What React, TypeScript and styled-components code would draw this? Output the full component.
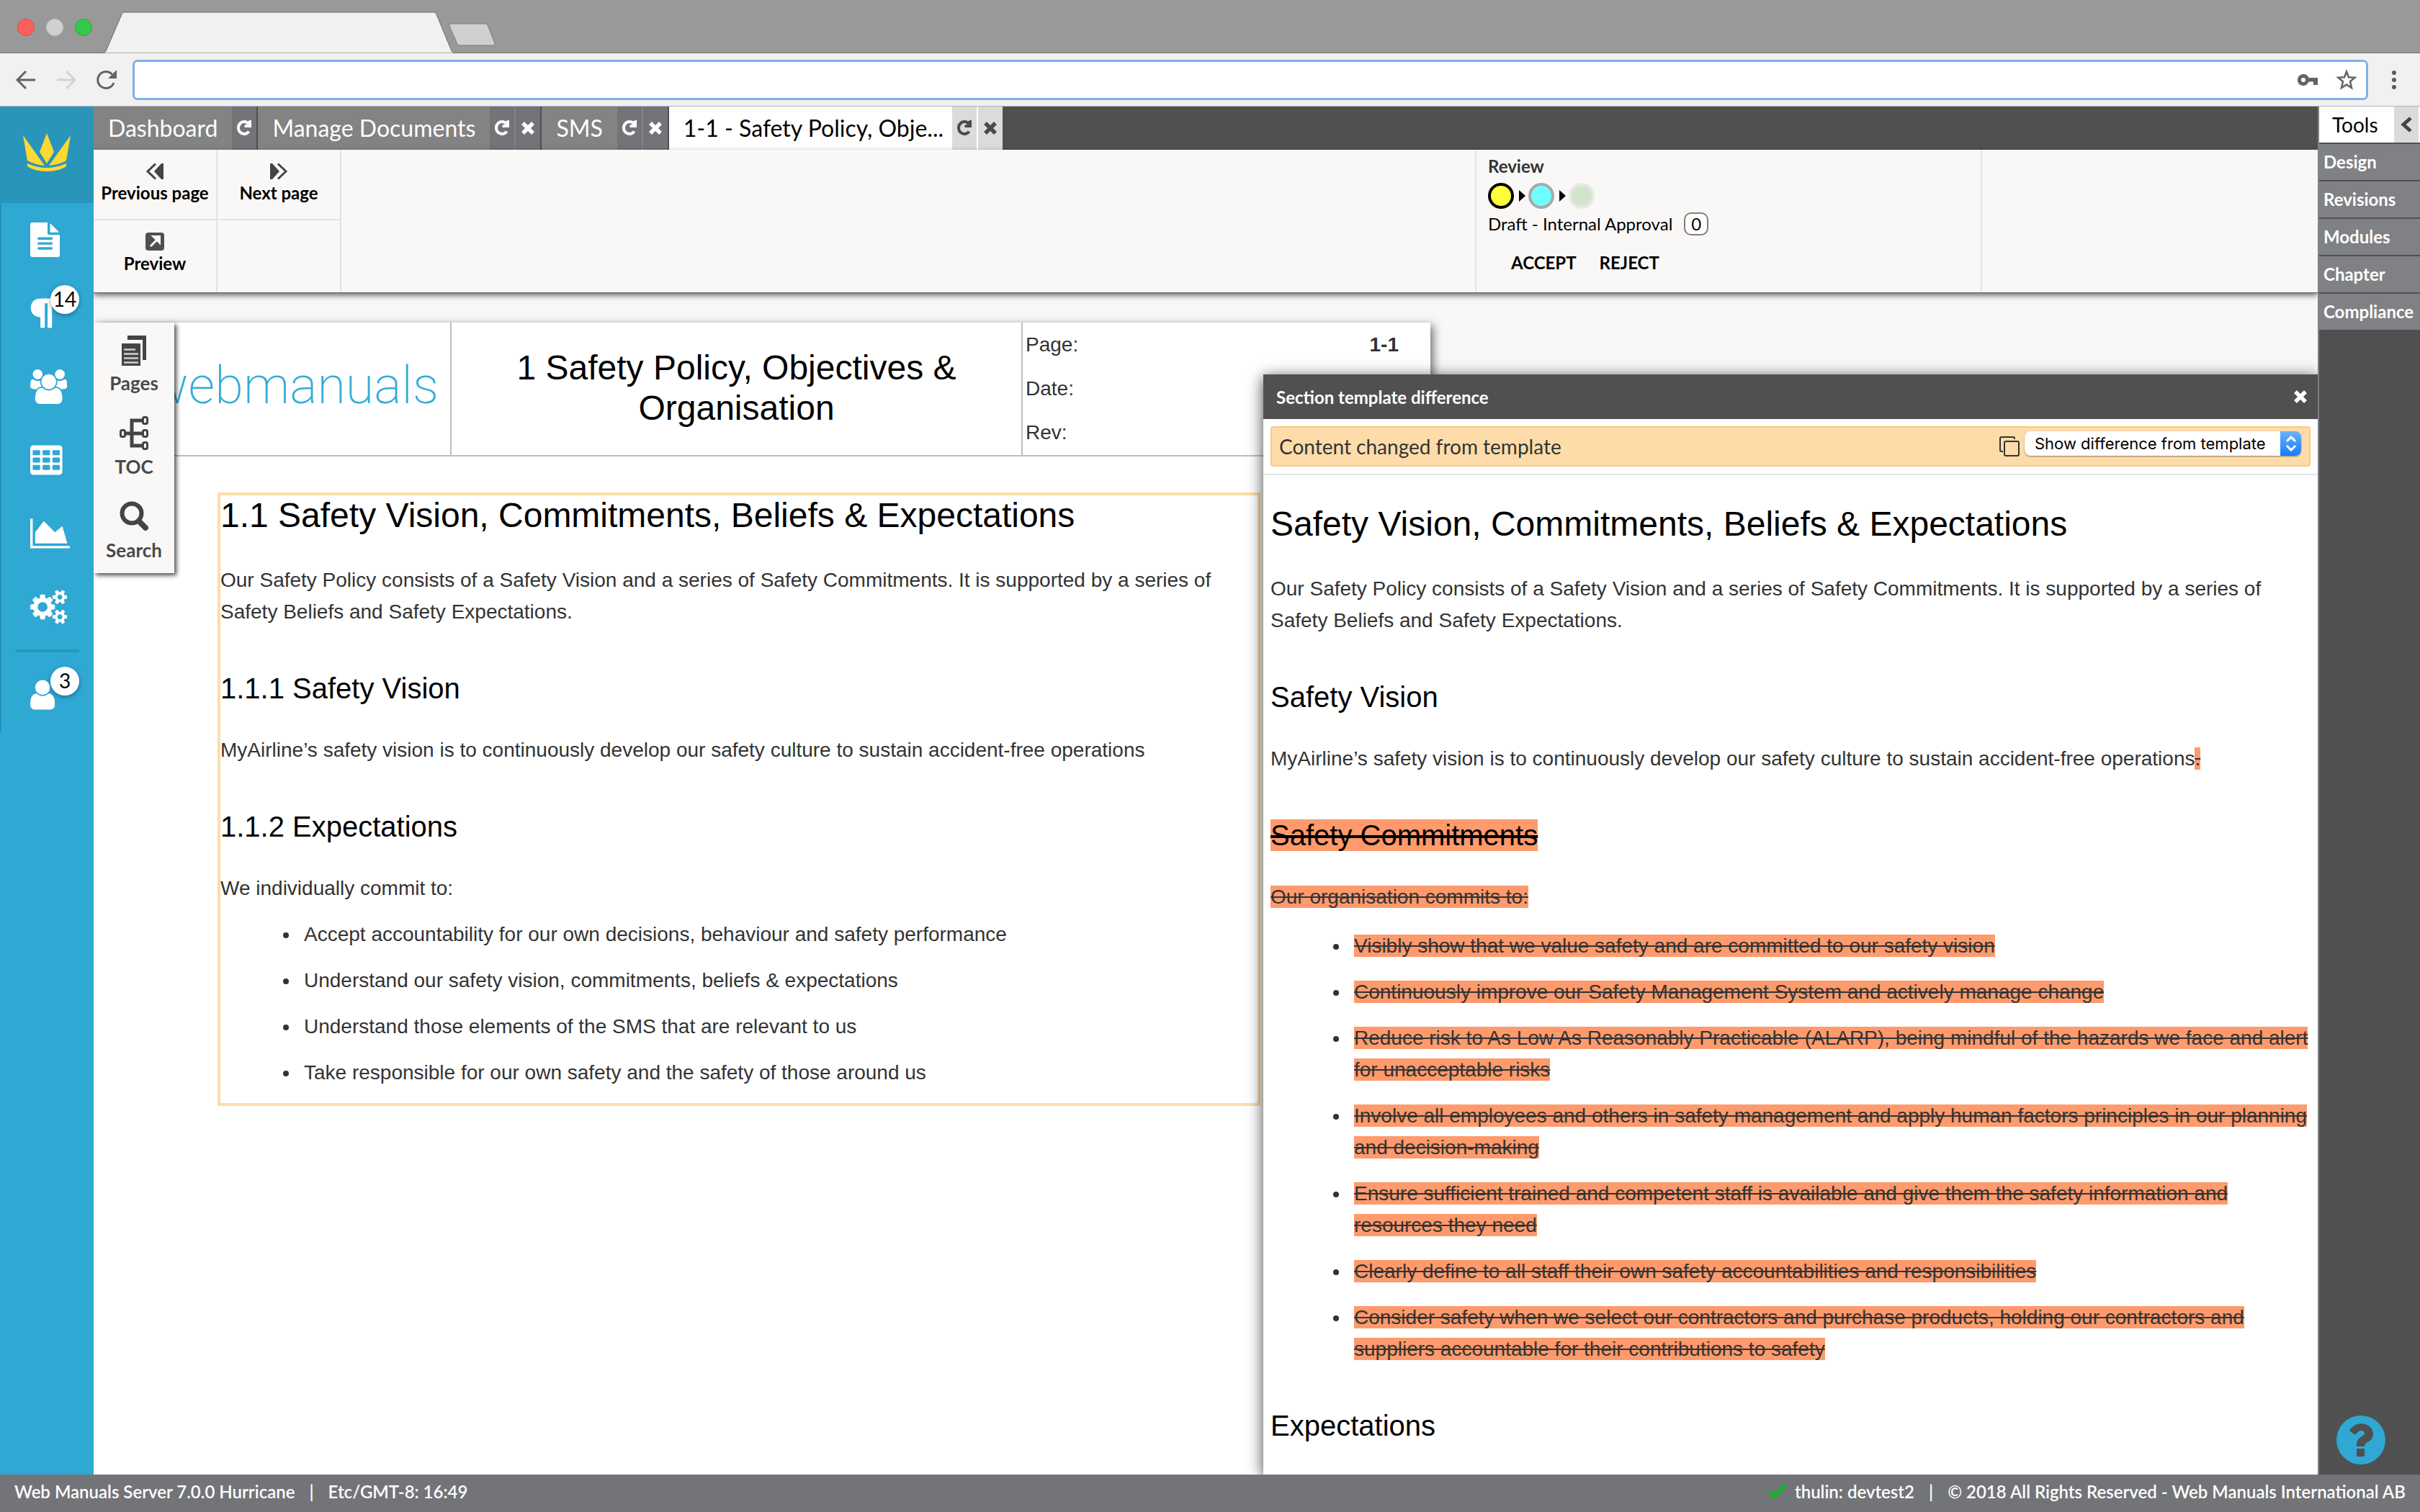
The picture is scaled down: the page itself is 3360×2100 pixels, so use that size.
import React from "react";
import styled, { createGlobalStyle, css } from "styled-components";

const ui = `Lato, "Open Sans", sans-serif`;
const doc = `"Liberation Sans", Arial, sans-serif`;

const GlobalStyle = createGlobalStyle`
  * { box-sizing: border-box; }
  body { margin: 0; font-family: ${ui}; font-size: 24px; color: #000; background: #fff; }
  button, input, select { font: inherit; color: inherit; margin: 0; padding: 0; border: 0; background: none; }
  svg { display: block; }
  h1, h2, p, ul, dl, dd { margin: 0; padding: 0; }
`;

const Shell = styled.div`
  height: 100vh;
  display: flex;
  flex-direction: column;
  overflow: hidden;
`;

/* Browser window */

const TitleBar = styled.div`
  display: flex;
  height: 74px;
  background: #999;
  border-bottom: 1px solid #6d6d6d;
`;

const Lights = styled.div`
  display: flex;
  align-items: center;
  gap: 16px;
  padding: 2px 16px 0 24px;
`;

const Light = styled.span<{ $fill: string; $edge: string }>`
  width: 24px;
  height: 24px;
  border-radius: 50%;
  background: ${(p) => p.$fill};
  border: 1px solid ${(p) => p.$edge};
`;

const NavBar = styled.div`
  display: flex;
  align-items: center;
  height: 74px;
  padding-left: 8px;
  background: #f1f1f1;
  border-bottom: 1px solid #b3b3b3;
`;

const NavButton = styled.button<{ $width?: number }>`
  width: ${(p) => p.$width ?? 56}px;
  height: 56px;
  display: grid;
  place-items: center;
  color: #646464;
`;

const AddressBar = styled.div`
  flex: 1;
  display: flex;
  align-items: center;
  height: 56px;
  margin-left: 8px;
  background: #fff;
  border: 3px solid #7fb1ea;
  border-radius: 7px;
`;

const AddressInput = styled.input`
  flex: 1;
  min-width: 0;
  height: 100%;
  padding: 0 12px;
  outline: 0;
`;

/* Application frame */

const Body = styled.div`
  flex: 1;
  min-height: 0;
  display: flex;
`;

const Sidebar = styled.nav`
  width: 130px;
  flex: none;
  background: #2fa8d4;
`;

const LogoTile = styled.div`
  height: 134px;
  padding: 36px 32px 0;
  background: #2995bb;
`;

const SideItem = styled.button`
  position: relative;
  display: flex;
  align-items: center;
  width: 100%;
  height: 102px;
  padding-left: 40px;
  border-left: 2px solid #2590b5;
  color: #fff;
`;

const SideDivider = styled.div`
  padding: 8px 20px;
  border-left: 2px solid #2590b5;
  &::after { content: ""; display: block; height: 4px; background: #2995bb; }
`;

const CountBadge = styled.span`
  position: absolute;
  left: 68px;
  top: 12px;
  width: 40px;
  height: 40px;
  border-radius: 50%;
  background: #fff;
  color: #000;
  font-size: 28px;
  line-height: 38px;
  text-align: center;
  box-shadow: 0 2px 6px rgba(0, 0, 0, 0.35);
`;

const Main = styled.div`
  position: relative;
  flex: 1;
  min-width: 0;
  display: flex;
  flex-direction: column;
  overflow: hidden;
  background: #f9f8f6;
`;

const Tabs = styled.div`
  display: flex;
  height: 60px;
  flex: none;
  background: #505050;
`;

const Tab = styled.div<{ $active?: boolean }>`
  display: flex;
  gap: 2px;
  background: ${(p) => (p.$active ? "#fff" : "#838383")};
  color: ${(p) => (p.$active ? "#000" : "#fff")};
  border-right: ${(p) => (p.$active ? 0 : 2)}px solid #505050;
`;

const TabLabel = styled.button<{ $active?: boolean }>`
  padding: 0 ${(p) => (p.$active ? 10 : 18)}px 0 20px;
  font-size: 32px;
  line-height: 60px;
`;

const TabAction = styled.button<{ $active?: boolean }>`
  width: 34px;
  display: grid;
  place-items: center;
  background: ${(p) => (p.$active ? "#dbdbdb" : "#737478")};
  color: ${(p) => (p.$active ? "#4a4a4a" : "#fff")};
`;

const Ribbon = styled.div`
  position: relative;
  z-index: 1;
  display: flex;
  height: 198px;
  flex: none;
  background: #f9f8f6;
  box-shadow: 0 1px 1px #6a6a68, 0 4px 8px rgba(0, 0, 0, 0.6);
`;

const PageActions = styled.div`
  display: grid;
  grid-template: 98px 100px / 172px 172px;
`;

const cell = css`
  border-right: 2px solid #e3e3e1;
  &:nth-child(-n + 2) { border-bottom: 2px solid #e3e3e1; }
`;

const PageAction = styled.button`
  ${cell}
  display: flex;
  flex-direction: column;
  align-items: center;
  padding-top: 16px;
  font-weight: 700;
  line-height: 32px;
  white-space: nowrap;
`;

const EmptyCell = styled.div`
  ${cell}
`;

const Review = styled.section`
  width: 704px;
  margin-left: auto;
  margin-right: 466px;
  padding: 7px 16px;
  border: solid #e3e3e1;
  border-width: 0 2px;
  line-height: 32px;
`;

const ReviewTitle = styled.h2`
  font-size: 24px;
  color: #333;
`;

const Steps = styled.div`
  display: flex;
  align-items: center;
  gap: 4px;
  margin: 7px 0 3px;
`;

const Step = styled.span<{ $fill: string; $edge: string }>`
  width: 36px;
  height: 36px;
  border-radius: 50%;
  background: ${(p) => p.$fill};
  border: 4px solid ${(p) => p.$edge};
`;

const Status = styled.div`
  display: flex;
  align-items: center;
  gap: 16px;
  height: 36px;
`;

const StatusCount = styled.span`
  width: 34px;
  height: 32px;
  border: 2px solid #7d7d7d;
  border-radius: 10px;
  background: #fff;
  line-height: 28px;
  text-align: center;
`;

const Decisions = styled.div`
  display: flex;
  gap: 32px;
  margin-top: 20px;
  padding-left: 32px;
  button { font-weight: 700; line-height: 32px; }
`;

const Canvas = styled.div`
  flex: 1;
  min-height: 0;
  padding-top: 42px;
`;

const Sheet = styled.article`
  width: 1856px;
  height: 100%;
  background: #fff;
  color: #333;
  font-family: ${doc};
  font-size: 28px;
  line-height: 44px;
  box-shadow: 4px 4px 12px rgba(0, 0, 0, 0.55);
`;

const SheetHeader = styled.header`
  display: grid;
  grid-template-columns: 497px 793px 1fr;
  height: 186px;
  border-bottom: 2px solid #bdbdbd;
`;

const SheetLogo = styled.div`
  display: flex;
  align-items: center;
  justify-content: flex-end;
  padding: 0 16px 8px 0;
  border-right: 2px solid #bdbdbd;
  color: #34acd6;
  font-family: Roboto, sans-serif;
  font-weight: 200;
  font-size: 72px;
  line-height: 92px;
`;

const SheetTitle = styled.div`
  display: grid;
  place-items: center;
  padding: 0 64px 2px;
  border-right: 2px solid #bdbdbd;
  color: #000;
  font-size: 48px;
  line-height: 56px;
  text-align: center;
`;

const Facts = styled.dl`
  padding: 0 44px 0 4px;
`;

const Fact = styled.div`
  display: flex;
  justify-content: space-between;
  line-height: 61px;
  dd { font-weight: 700; }
`;

const Prose = styled.div`
  font-family: ${doc};
  font-size: 28px;
  line-height: 44px;
  color: #333;
  h1, h2 { color: #000; font-weight: 400; margin-bottom: 40px; }
  h1 { font-size: 48px; line-height: 56px; }
  h2 { font-size: 40px; line-height: 48px; margin-top: 60px; }
  ul { padding-left: 110px; }
  li { margin-top: 20px; padding-left: 6px; }
`;

const SectionBox = styled(Prose)`
  width: 1448px;
  margin: 50px 0 0 172px;
  padding-bottom: 20px;
  border: 4px solid #fddcaa;
`;

const Dock = styled.div`
  position: absolute;
  z-index: 2;
  left: 0;
  top: 300px;
  width: 112px;
  height: 348px;
  display: flex;
  flex-direction: column;
  padding-top: 10px;
  background: #f9f8f6;
  box-shadow: 3px 3px 6px rgba(0, 0, 0, 0.7);
`;

const DockButton = styled.button`
  height: 116px;
  flex: none;
  display: flex;
  flex-direction: column;
  align-items: center;
  justify-content: flex-start;
  gap: 2px;
  font-weight: 700;
  font-size: 26px;
  line-height: 32px;
  color: #4a4a4a;
`;

/* Template difference window */

const Dialog = styled.section`
  position: absolute;
  z-index: 3;
  right: 0;
  top: 372px;
  bottom: 0;
  width: 1464px;
  display: flex;
  flex-direction: column;
  background: #fff;
  box-shadow: 0 4px 20px rgba(0, 0, 0, 0.75);
`;

const DialogHead = styled.header`
  display: flex;
  align-items: center;
  justify-content: space-between;
  height: 62px;
  flex: none;
  padding: 0 9px 0 18px;
  background: #505050;
  color: #fff;
  font-weight: 700;
  button { width: 30px; height: 40px; display: grid; place-items: center; }
`;

const NoticeRow = styled.div`
  padding: 10px;
  border-bottom: 2px solid #e4e4e4;
`;

const Notice = styled.div`
  display: flex;
  align-items: center;
  height: 56px;
  padding: 0 11px 0 10px;
  background: #fddcaa;
  border: 2px solid #fcc974;
  border-radius: 4px;
  color: #333;
  font-size: 28px;
`;

const CopyButton = styled.button`
  margin-left: auto;
  margin-right: 6px;
`;

const SelectWrap = styled.label`
  position: relative;
  width: 384px;
  height: 34px;
  margin-bottom: 8px;
`;

const Select = styled.select`
  display: block;
  appearance: none;
  width: 100%;
  height: 34px;
  padding: 0 32px 0 14px;
  border-radius: 8px;
  background: #fff;
  box-shadow: 0 1px 2px rgba(0, 0, 0, 0.45);
  color: #000;
  font-family: Inter, sans-serif;
  font-size: 22px;
  line-height: 34px;
`;

const SelectArrows = styled.span`
  position: absolute;
  right: 0;
  top: 0;
  width: 29px;
  height: 34px;
  display: grid;
  place-items: center;
  border-radius: 0 8px 8px 0;
  background: linear-gradient(#6db2fa, #167dfc);
  pointer-events: none;
`;

const DialogBody = styled(Prose)`
  padding: 40px 6px 0 10px;
  ul { padding-top: 4px; }
`;

const Removed = styled.del`
  background: #fe9a6c;
`;

/* Tools column */

const Tools = styled.aside`
  position: relative;
  width: 142px;
  flex: none;
  background: #505050;
  border-left: 2px solid #808184;
`;

const ToolsHead = styled.div`
  display: flex;
  height: 50px;
  padding-right: 2px;
  background: #fff;
  font-size: 28px;
  line-height: 50px;
`;

const ToolsTitle = styled.span`
  flex: 1;
  padding-left: 18px;
`;

const Collapse = styled.button`
  width: 34px;
  display: grid;
  place-items: center;
  background: #dbdbdb;
`;

const ToolItem = styled.button`
  display: block;
  width: 100%;
  height: 50px;
  margin-top: 2px;
  padding: 0 0 2px 6px;
  background: #808184;
  color: #fff;
  font-weight: 700;
  text-align: left;
`;

const Help = styled.button`
  position: absolute;
  right: 48px;
  bottom: 14px;
`;

/* Status line */

const Footer = styled.footer`
  display: flex;
  align-items: center;
  justify-content: space-between;
  height: 52px;
  padding: 0 20px 6px;
  background: #737478;
  color: #fff;
  font-weight: 600;
`;

const FooterGroup = styled.div`
  display: flex;
  align-items: center;
  gap: 20px;
`;

const User = styled.span`
  display: flex;
  align-items: center;
  gap: 11px;
`;

/* Drawings */

const icons = {
  file: {
    box: "128 0 1536 1792",
    d: "M1596 476q14 14 28 36h-472v-472q22 14 36 28zm-476 164h544v1056q0 40-28 68t-68 28h-1344q-40 0-68-28t-28-68v-1600q0-40 28-68t68-28h800v544q0 40 28 68t68 28zm160 736v-64q0-14-9-23t-23-9h-704q-14 0-23 9t-9 23v64q0 14 9 23t23 9h704q14 0 23-9t9-23zm0-256v-64q0-14-9-23t-23-9h-704q-14 0-23 9t-9 23v64q0 14 9 23t23 9h704q14 0 23-9t9-23zm0-256v-64q0-14-9-23t-23-9h-704q-14 0-23 9t-9 23v64q0 14 9 23t23 9h704q14 0 23-9t9-23z",
  },
  paragraph: {
    box: "256 0 1280 1792",
    d: "M1534 189v73q0 29-18.5 61t-42.5 32q-50 0-54 1-26 6-32 31-3 11-3 64v1152q0 25-18 43t-43 18h-108q-25 0-43-18t-18-43v-1218h-143v1218q0 25-17.5 43t-43.5 18h-108q-26 0-43.5-18t-17.5-43v-496q-147-12-245-59-126-58-192-179-64-117-64-259 0-166 88-286 88-118 209-159 111-37 417-37h479q25 0 43 18t18 43z",
  },
  users: {
    box: "0 0 1920 1792",
    d: "M593 896q-162 5-265 128h-134q-82 0-138-40.5t-56-118.5q0-353 124-353 6 0 43.5 21t97.5 42.5 119 21.5q67 0 133-23-5 37-5 66 0 139 81 256zm1071 637q0 120-73 189.5t-194 69.5h-874q-121 0-194-69.5t-73-189.5q0-53 3.5-103.5t14-109 26.5-108.5 43-97.5 62-81 85.5-53.5 111.5-20q10 0 43 21.5t73 48 107 48 135 21.5 135-21.5 107-48 73-48 43-21.5q61 0 111.5 20t85.5 53.5 62 81 43 97.5 26.5 108.5 14 109 3.5 103.5zm-1024-1277q0 106-75 181t-181 75-181-75-75-181 75-181 181-75 181 75 75 181zm704 384q0 159-112.5 271.5t-271.5 112.5-271.5-112.5-112.5-271.5 112.5-271.5 271.5-112.5 271.5 112.5 112.5 271.5zm576 225q0 78-56 118.5t-138 40.5h-134q-103-123-265-128 81-117 81-256 0-29-5-66 66 23 133 23 59 0 119-21.5t97.5-42.5 43.5-21q124 0 124 353zm-128-609q0 106-75 181t-181 75-181-75-75-181 75-181 181-75 181 75 75 181z",
  },
  table: {
    box: "0 0 1664 1792",
    d: "M160 128h1344q66 0 113 47t47 113v1216q0 66-47 113t-113 47h-1344q-66 0-113-47t-47-113v-1216q0-66 47-113t113-47zM128 416v192q0 32 32 32h320q32 0 32-32v-192q0-32-32-32h-320q-32 0-32 32zm512 0v192q0 32 32 32h320q32 0 32-32v-192q0-32-32-32h-320q-32 0-32 32zm512 0v192q0 32 32 32h320q32 0 32-32v-192q0-32-32-32h-320q-32 0-32 32zM128 800v192q0 32 32 32h320q32 0 32-32v-192q0-32-32-32h-320q-32 0-32 32zm512 0v192q0 32 32 32h320q32 0 32-32v-192q0-32-32-32h-320q-32 0-32 32zm512 0v192q0 32 32 32h320q32 0 32-32v-192q0-32-32-32h-320q-32 0-32 32zM128 1184v192q0 32 32 32h320q32 0 32-32v-192q0-32-32-32h-320q-32 0-32 32zm512 0v192q0 32 32 32h320q32 0 32-32v-192q0-32-32-32h-320q-32 0-32 32zm512 0v192q0 32 32 32h320q32 0 32-32v-192q0-32-32-32h-320q-32 0-32 32z",
  },
  chart: {
    box: "0 0 2048 1792",
    d: "M2048 1536v128h-2048v-1536h128v1408h1920zm-384-1024l256 896h-1664v-576l448-576 576 576z",
  },
  cogs: {
    box: "0 0 1920 1792",
    d: "M896 896q0-106-75-181t-181-75-181 75-75 181 75 181 181 75 181-75 75-181zm768 512q0-52-38-90t-90-38-90 38-38 90q0 53 37.5 90.5t90.5 37.5 90.5-37.5 37.5-90.5zm0-1024q0-52-38-90t-90-38-90 38-38 90q0 53 37.5 90.5t90.5 37.5 90.5-37.5 37.5-90.5zm-384 421v185q0 10-7 19.5t-16 10.5l-155 24q-11 35-32 76 34 48 90 115 7 11 7 20 0 12-7 19-23 30-82.5 89.5t-78.5 59.5q-11 0-21-7l-115-90q-37 19-77 31-11 108-23 155-7 24-30 24h-186q-11 0-20-7.5t-10-17.5l-23-153q-34-10-75-31l-118 89q-7 7-20 7-11 0-21-8-144-133-144-160 0-9 7-19 10-14 41-53t47-61q-23-44-35-82l-152-24q-10-1-17-9.5t-7-19.5v-185q0-10 7-19.5t16-10.5l155-24q11-35 32-76-34-48-90-115-7-11-7-20 0-12 7-20 22-30 82-89t79-59q11 0 21 7l115 90q34-18 77-32 11-108 23-154 7-24 30-24h186q11 0 20 7.5t10 17.5l23 153q34 10 75 31l118-89q8-7 20-7 11 0 21 8 144 133 144 160 0 8-7 19-12 16-42 54t-45 60q23 48 34 82l152 23q10 2 17 10.5t7 19.5zm640 533v140q0 16-149 31-12 27-30 52 51 113 51 138 0 4-4 7-122 71-124 71-8 0-46-47t-52-68q-20 2-30 2t-30-2q-14 21-52 68t-46 47q-2 0-124-71-4-3-4-7 0-25 51-138-18-25-30-52-149-15-149-31v-140q0-16 149-31 13-29 30-52-51-113-51-138 0-4 4-7 4-2 35-20t59-34 30-16q8 0 46 46.500t52 67.500q20-2 30-2t30 2q51-71 92-112l6-2q4 0 124 70 4 3 4 7 0 25-51 138 17 23 30 52 149 15 149 31zm0-1024v140q0 16-149 31-12 27-30 52 51 113 51 138 0 4-4 7-122 71-124 71-8 0-46-47t-52-68q-20 2-30 2t-30-2q-14 21-52 68t-46 47q-2 0-124-71-4-3-4-7 0-25 51-138-18-25-30-52-149-15-149-31v-140q0-16 149-31 13-29 30-52-51-113-51-138 0-4 4-7 4-2 35-20t59-34 30-16q8 0 46 46.500t52 67.500q20-2 30-2t30 2q51-71 92-112l6-2q4 0 124 70 4 3 4 7 0 25-51 138 17 23 30 52 149 15 149 31z",
  },
  user: {
    box: "256 0 1280 1792",
    d: "M1536 1399q0 109-62.500 187t-150.500 78h-854q-88 0-150.500-78t-62.500-187q0-85 8.500-160.500t31.500-152 58.500-131 94-89 134.500-34.500q131 128 313 128t313-128q76 0 134.500 34.500t94 89 58.500 131 31.500 152 8.500 160.500zm-256-887q0 159-112.500 271.500t-271.500 112.500-271.500-112.500-112.500-271.500 112.500-271.500 271.500-112.500 271.500 112.500 112.500 271.500z",
  },
};

const Glyph = ({ name }: { name: keyof typeof icons }) => (
  <svg height="48" viewBox={icons[name].box} fill="currentColor" fillRule="evenodd" aria-hidden>
    <path d={icons[name].d} />
  </svg>
);

const Crown = () => (
  <svg width="66" height="56" viewBox="0 0 66 56" fill="#fdd835" aria-hidden>
    <path d="M0 4 30 46Q17 45 6 39Z" />
    <path d="M66 4 36 46Q49 45 60 39Z" />
    <path d="M33 1 43 27 33 43 23 27Z" />
    <path d="M6 43Q33 55 60 43V47Q50 54 33 54 16 54 6 47Z" />
  </svg>
);

const Reload = () => (
  <svg width="24" height="26" viewBox="0 0 24 26" aria-hidden>
    <path d="M18.500 17.500A8 8.500 0 1 1 18 7" fill="none" stroke="currentColor" strokeWidth="4" />
    <path d="M22 1.500V12H12.500V8.500L18 7.500 17.500 3Z" fill="currentColor" />
  </svg>
);

const Cross = () => (
  <svg width="18" height="18" viewBox="0 0 18 18" stroke="currentColor" strokeWidth="5.500" aria-hidden>
    <path d="M2 2 16 16M16 2 2 16" />
  </svg>
);

const Rewind = ({ forward }: { forward?: boolean }) => (
  <svg width="26" height="28" viewBox="0 0 26 28" aria-hidden>
    <g transform={forward ? "matrix(-1 0 0 1 26 0)" : undefined}>
      <path d="M25 3V25H22L12 14 22 3Z" fill="#444" />
      <path d="M14 3.500 3 14 14 24.500" fill="none" stroke="#444" strokeWidth="3" />
    </g>
  </svg>
);

const Arrow = () => (
  <svg width="12" height="16" viewBox="0 0 12 16" aria-hidden>
    <path d="M3 0 12 8 3 16Z" />
  </svg>
);

const kept = [
  "Accept accountability for our own decisions, behaviour and safety performance",
  "Understand our safety vision, commitments, beliefs & expectations",
  "Understand those elements of the SMS that are relevant to us",
  "Take responsible for our own safety and the safety of those around us",
];

const removed = [
  "Visibly show that we value safety and are committed to our safety vision",
  "Continuously improve our Safety Management System and actively manage change",
  "Reduce risk to As Low As Reasonably Practicable (ALARP), being mindful of the hazards we face and alert for unacceptable risks",
  "Involve all employees and others in safety management and apply human factors principles in our planning and decision-making",
  "Ensure sufficient trained and competent staff is available and give them the safety information and resources they need",
  "Clearly define to all staff their own safety accountabilities and responsibilities",
  "Consider safety when we select our contractors and purchase products, holding our contractors and suppliers accountable for their contributions to safety",
];

const intro =
  "Our Safety Policy consists of a Safety Vision and a series of Safety Commitments. It is supported by a series of Safety Beliefs and Safety Expectations.";
const vision =
  "MyAirline’s safety vision is to continuously develop our safety culture to sustain accident-free operations";

const tabs = [
  { label: "Dashboard" },
  { label: "Manage Documents", closable: true },
  { label: "SMS", closable: true },
  { label: "1-1 - Safety Policy, Obje...", closable: true, active: true },
];

const sideItems: { name: keyof typeof icons; label: string; count?: number }[] = [
  { name: "file", label: "Documents" },
  { name: "paragraph", label: "Compliance", count: 14 },
  { name: "users", label: "Users" },
  { name: "table", label: "Forms" },
  { name: "chart", label: "Statistics" },
  { name: "cogs", label: "Settings" },
];

export default function App() {
  return (
    <Shell>
      <GlobalStyle />
      <TitleBar>
        <Lights>
          <Light $fill="#fc605c" $edge="#df4744" />
          <Light $fill="#d0d0d0" $edge="#c4c4c4" />
          <Light $fill="#34c84a" $edge="#27a937" />
        </Lights>
        <svg width="560" height="74" viewBox="0 0 560 74" aria-hidden>
          <path d="M0 74 3 71 25 20Q26 17 29 17H459Q461 17 462 20L483 71 486 74Z" fill="#f1f1f1" stroke="#6d6d6d" />
          <path d="M483 33H530Q532 33 533 35L543 60Q544 63 541 63H494Q492 63 491 61L480 36Q479 33 483 33Z" fill="#d0d0d0" stroke="#7d7d7d" />
        </svg>
      </TitleBar>
      <NavBar>
        <NavButton aria-label="Back">
          <svg width="28" height="28" viewBox="0 0 28 28" fill="none" stroke="#646464" strokeWidth="3">
            <path d="M27 14H3M14 2 2 14 14 26" />
          </svg>
        </NavButton>
        <NavButton aria-label="Forward">
          <svg width="28" height="28" viewBox="0 0 28 28" fill="none" stroke="#d2d2d2" strokeWidth="3">
            <path d="M1 14H25M14 2 26 14 14 26" />
          </svg>
        </NavButton>
        <NavButton aria-label="Reload">
          <svg width="28" height="28" viewBox="0 0 28 28">
            <path d="M24 18A11.500 11.500 0 1 1 21.500 6" fill="none" stroke="#646464" strokeWidth="3" />
            <path d="M28 0V12H16Z" fill="#646464" />
          </svg>
        </NavButton>
        <AddressBar>
          <AddressInput type="text" aria-label="Address" />
          <NavButton $width={54} aria-label="Saved password">
            <svg width="28" height="16" viewBox="0 0 28 16" fill="#646464" fillRule="evenodd">
              <path d="M8 0A8 8 0 0 1 15.500 5H28V15H22V10.500H15.500A8 8 0 1 1 8 0ZM8 5A3 3 0 1 0 8 11 3 3 0 0 0 8 5Z" />
            </svg>
          </NavButton>
          <NavButton $width={54} aria-label="Bookmark">
            <svg width="30" height="30" viewBox="0 0 30 30" fill="none" stroke="#646464" strokeWidth="2.500">
              <path d="M15 3.500 18 11.200 26.500 11.800 20 17.300 22 26 15 21.400 8 26 10 17.300 3.500 11.800 12 11.200Z" />
            </svg>
          </NavButton>
        </AddressBar>
        <NavButton $width={72} aria-label="Menu">
          <svg width="6" height="28" viewBox="0 0 6 28" fill="#5a5a5a">
            <circle cx="3" cy="4" r="3" />
            <circle cx="3" cy="14" r="3" />
            <circle cx="3" cy="24" r="3" />
          </svg>
        </NavButton>
      </NavBar>

      <Body>
        <Sidebar>
          <LogoTile>
            <Crown />
          </LogoTile>
          {sideItems.map((item) => (
            <SideItem key={item.name} aria-label={item.label}>
              <Glyph name={item.name} />
              {item.count && <CountBadge>{item.count}</CountBadge>}
            </SideItem>
          ))}
          <SideDivider />
          <SideItem aria-label="Profile">
            <Glyph name="user" />
            <CountBadge>3</CountBadge>
          </SideItem>
        </Sidebar>

        <Main>
          <Tabs>
            {tabs.map((t) => (
              <Tab key={t.label} $active={t.active}>
                <TabLabel $active={t.active}>{t.label}</TabLabel>
                <TabAction $active={t.active} aria-label={`Reload ${t.label}`}>
                  <Reload />
                </TabAction>
                {t.closable && (
                  <TabAction $active={t.active} aria-label={`Close ${t.label}`}>
                    <Cross />
                  </TabAction>
                )}
              </Tab>
            ))}
          </Tabs>

          <Ribbon>
            <PageActions>
              <PageAction>
                <Rewind />
                Previous page
              </PageAction>
              <PageAction>
                <Rewind forward />
                Next page
              </PageAction>
              <PageAction>
                <svg width="26" height="28" viewBox="0 0 26 28" aria-hidden>
                  <rect x="0" y="1" width="26" height="25" rx="4" fill="#505050" />
                  <path d="M7 20 17 10M11 6.500H19.500V15Z" stroke="#f9f8f6" strokeWidth="3" fill="#f9f8f6" />
                </svg>
                Preview
              </PageAction>
              <EmptyCell />
            </PageActions>
            <Review>
              <ReviewTitle>Review</ReviewTitle>
              <Steps>
                <Step $fill="#fffd38" $edge="#000" />
                <Arrow />
                <Step $fill="#70fdfe" $edge="#a9a9a9" />
                <Arrow />
                <Step $fill="#d2e5cb" $edge="#e8e8e8" />
              </Steps>
              <Status>
                Draft - Internal Approval
                <StatusCount>0</StatusCount>
              </Status>
              <Decisions>
                <button>ACCEPT</button>
                <button>REJECT</button>
              </Decisions>
            </Review>
          </Ribbon>

          <Canvas>
            <Sheet>
              <SheetHeader>
                <SheetLogo>webmanuals</SheetLogo>
                <SheetTitle>1 Safety Policy, Objectives &amp; Organisation</SheetTitle>
                <Facts>
                  <Fact>
                    <dt>Page:</dt>
                    <dd>1-1</dd>
                  </Fact>
                  <Fact>
                    <dt>Date:</dt>
                  </Fact>
                  <Fact>
                    <dt>Rev:</dt>
                  </Fact>
                </Facts>
              </SheetHeader>
              <SectionBox>
                <h1>1.1 Safety Vision, Commitments, Beliefs &amp; Expectations</h1>
                <p>{intro}</p>
                <h2>1.1.1 Safety Vision</h2>
                <p>{vision}</p>
                <h2>1.1.2 Expectations</h2>
                <p>We individually commit to:</p>
                <ul>
                  {kept.map((line) => (
                    <li key={line}>{line}</li>
                  ))}
                </ul>
              </SectionBox>
            </Sheet>
          </Canvas>

          <Dock>
            <DockButton>
              <svg width="40" height="56" viewBox="0 0 40 56" aria-hidden>
                <path d="M11 8H37V42H32V14H11Z" fill="#444" />
                <path d="M3 19H29V50H3Z" fill="#444" />
                <path d="M6 27.500H22M6 33.500H26M6 39.500H26M6 45.500H26" stroke="#cfcfcf" strokeWidth="2.500" />
              </svg>
              Pages
            </DockButton>
            <DockButton>
              <svg width="40" height="56" viewBox="0 0 40 56" fill="none" stroke="#444" aria-hidden>
                <path d="M32 10H17V45H32M8 28H32" strokeWidth="5" />
                <g fill="#f9f8f6" strokeWidth="3">
                  <rect x="1.500" y="23.500" width="6" height="9" rx="2" />
                  <rect x="32.500" y="5.500" width="6" height="9" rx="2" />
                  <rect x="32.500" y="23.500" width="6" height="9" rx="2" />
                  <rect x="32.500" y="40.500" width="6" height="9" rx="2" />
                </g>
              </svg>
              TOC
            </DockButton>
            <DockButton>
              <svg width="40" height="56" viewBox="0 0 40 56" fill="none" stroke="#444" aria-hidden>
                <circle cx="17" cy="23" r="13.500" strokeWidth="6" />
                <path d="M27 34 36 43" strokeWidth="8" strokeLinecap="round" />
              </svg>
              Search
            </DockButton>
          </Dock>

          <Dialog aria-label="Section template difference">
            <DialogHead>
              Section template difference
              <button aria-label="Close">
                <Cross />
              </button>
            </DialogHead>
            <NoticeRow>
              <Notice>
                Content changed from template
                <CopyButton aria-label="Copy">
                  <svg width="30" height="30" viewBox="0 0 30 30" fill="none" stroke="#333" strokeWidth="2">
                    <path d="M6 22H4Q2 22 2 20V4Q2 2 4 2H20Q22 2 22 4V5" />
                    <rect x="8" y="8" width="20" height="20" rx="2" />
                  </svg>
                </CopyButton>
                <SelectWrap>
                  <Select aria-label="Comparison">
                    <option>Show difference from template</option>
                  </Select>
                  <SelectArrows>
                    <svg width="16" height="22" viewBox="0 0 16 22" fill="none" stroke="#fff" strokeWidth="3">
                      <path d="M2 8 8 2 14 8M2 14 8 20 14 14" />
                    </svg>
                  </SelectArrows>
                </SelectWrap>
              </Notice>
            </NoticeRow>
            <DialogBody>
              <h1>Safety Vision, Commitments, Beliefs &amp; Expectations</h1>
              <p>{intro}</p>
              <h2>Safety Vision</h2>
              <p>
                {vision}
                <Removed>.</Removed>
              </p>
              <h2>
                <Removed>Safety Commitments</Removed>
              </h2>
              <p>
                <Removed>Our organisation commits to:</Removed>
              </p>
              <ul>
                {removed.map((line) => (
                  <li key={line}>
                    <Removed>{line}</Removed>
                  </li>
                ))}
              </ul>
              <h2>Expectations</h2>
            </DialogBody>
          </Dialog>
        </Main>

        <Tools>
          <ToolsHead>
            <ToolsTitle>Tools</ToolsTitle>
            <Collapse aria-label="Collapse tools">
              <svg width="16" height="24" viewBox="0 0 16 24" fill="none" stroke="#444" strokeWidth="5">
                <path d="M14 3 4 12 14 21" />
              </svg>
            </Collapse>
          </ToolsHead>
          {["Design", "Revisions", "Modules", "Chapter", "Compliance"].map((name) => (
            <ToolItem key={name}>{name}</ToolItem>
          ))}
          <Help aria-label="Help">
            <svg width="68" height="68" viewBox="0 0 68 68">
              <circle cx="34" cy="34" r="34" fill="#2fa8d4" />
              <path
                d="M18 21Q24 11 35 11 51 13 51 27 50 34 43 37 39 39 39 43H28V40Q28 33 35 29 39 27 39 25 39 21 34 21 30 21 26 27Z"
                fill="#505050"
              />
              <rect x="28" y="46" width="11" height="11" rx="1" fill="#505050" />
            </svg>
          </Help>
        </Tools>
      </Body>

      <Footer>
        <FooterGroup>
          <span>Web Manuals Server 7.0.0 Hurricane</span>
          <span>|</span>
          <span>Etc/GMT-8: 16:49</span>
        </FooterGroup>
        <FooterGroup>
          <User>
            <svg width="26" height="22" viewBox="0 0 26 22" fill="none" stroke="#1fae35" strokeWidth="6" aria-hidden>
              <path d="M2 11 9 18 24 2" />
            </svg>
            thulin: devtest2
          </User>
          <span>|</span>
          <span>© 2018 All Rights Reserved - Web Manuals International AB</span>
        </FooterGroup>
      </Footer>
    </Shell>
  );
}
